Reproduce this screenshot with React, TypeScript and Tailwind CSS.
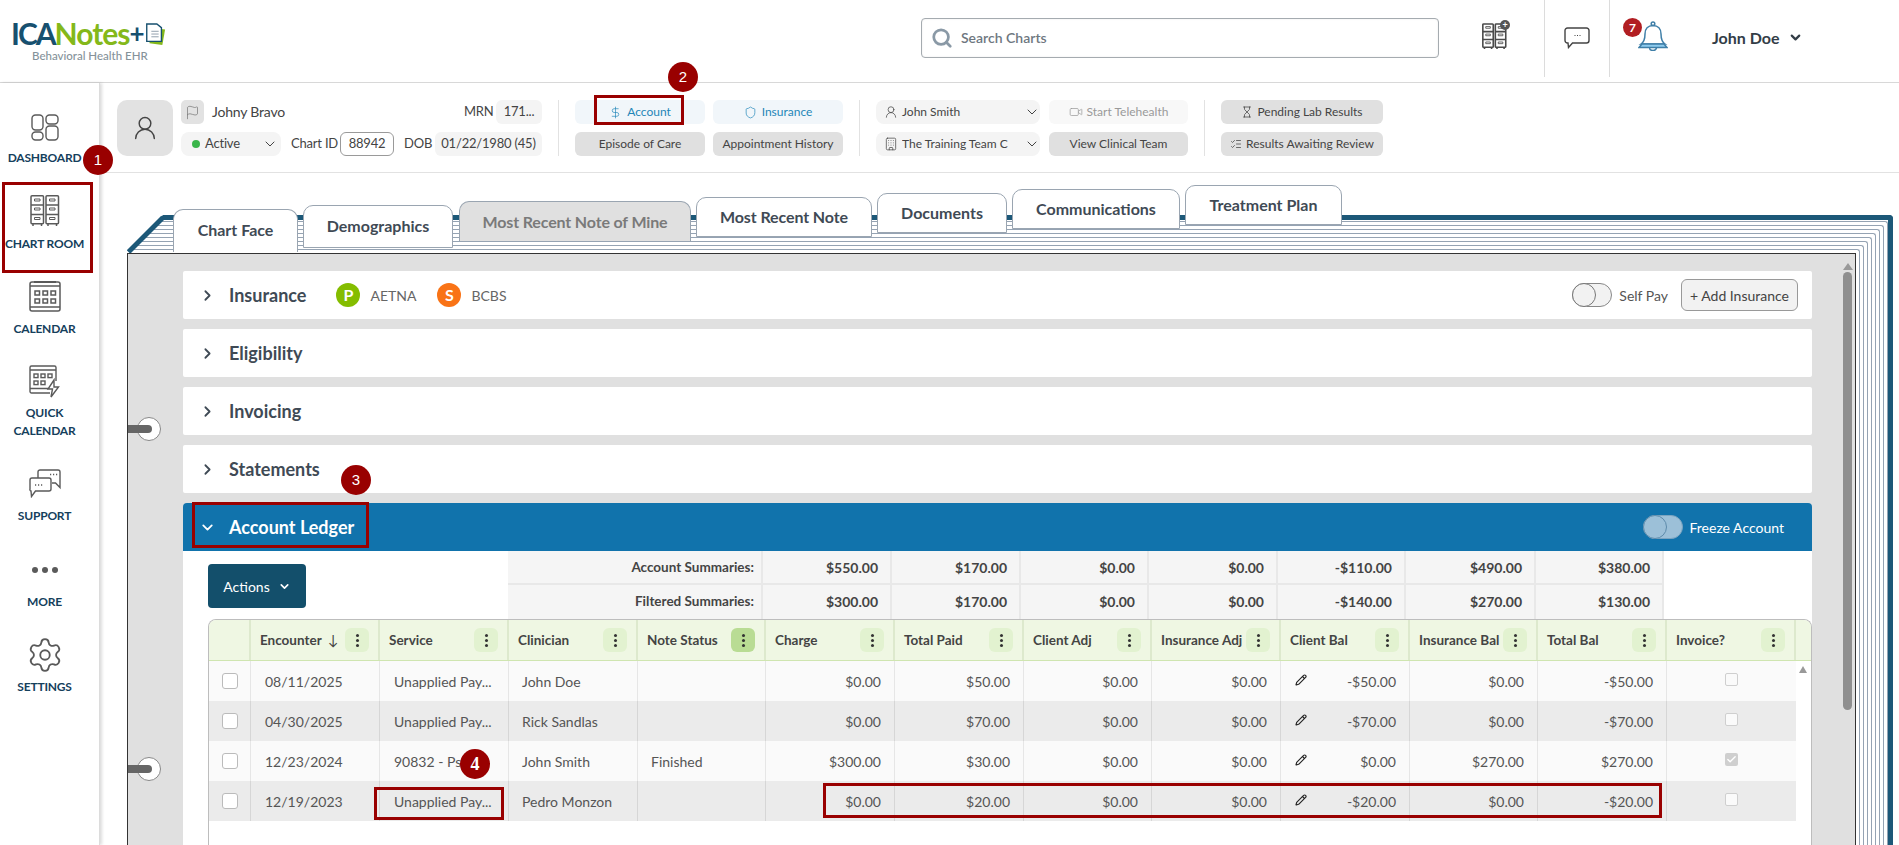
import React from "react";
import { Building, Check, ChevronDown, ChevronRight, DollarSign, Flag, Hourglass, ListChecks, Pencil, Search, Settings, Shield, UserRound, Video } from "lucide-react";

const Dashboard = () => (
  <svg width="28" height="27" viewBox="0 0 28 27" fill="none" stroke="#5a5a5a" strokeWidth="1.4">
    <rect x="1" y="1" width="11" height="15" rx="3.5" />
    <rect x="15" y="1" width="12" height="9" rx="3.5" />
    <rect x="1" y="18" width="11" height="8" rx="3.5" />
    <rect x="15" y="12" width="12" height="14" rx="3.5" />
  </svg>
);

const CabinetCol = ({ x }: { x: number }) => (
  <g>
    <rect x={x} y="0.8" width="12.5" height="28" rx="1" />
    <path d={`M${x} 10h12.5M${x} 19.5h12.5M${x + 2} 29v2M${x + 10.5} 29v2`} />
    <path d={`M${x + 3.5} 4h5.5v2h-5.5zM${x + 3.5} 13h5.5v2h-5.5zM${x + 3.5} 22.5h5.5v2h-5.5z`} strokeWidth="1" />
  </g>
);

const Cabinet = () => (
  <svg width="30" height="32" viewBox="0 0 30 32" fill="none" stroke="#5a5a5a" strokeWidth="1.5">
    <CabinetCol x={1} />
    <CabinetCol x={16} />
  </svg>
);

const CalendarIcon = () => (
  <svg width="32" height="31" viewBox="0 0 32 31" fill="none" stroke="#5a5a5a" strokeWidth="1.5">
    <rect x="1" y="1" width="30" height="29" rx="2" />
    <path d="M1 5h30M1 26h30" />
    <path d="M5 .8h22" strokeWidth="2.4" />
    <rect x="6" y="10" width="4.5" height="4" /><rect x="14" y="10" width="4.5" height="4" /><rect x="22" y="10" width="4.5" height="4" />
    <rect x="6" y="18" width="4.5" height="4" /><rect x="14" y="18" width="4.5" height="4" /><rect x="22" y="18" width="4.5" height="4" />
  </svg>
);

const QuickCalendar = () => (
  <svg width="31" height="33" viewBox="0 0 31 33" fill="none" stroke="#5a5a5a" strokeWidth="1.4">
    <path d="M21 28H2.5a1.5 1.5 0 0 1-1.5-1.5v-24A1.5 1.5 0 0 1 2.5 1h23A1.5 1.5 0 0 1 27 2.5V16" />
    <path d="M1 5h26M1 23.5h18" />
    <rect x="5" y="9" width="4" height="3.6" /><rect x="12" y="9" width="4" height="3.6" /><rect x="19" y="9" width="4" height="3.6" />
    <rect x="5" y="16" width="4" height="3.6" /><rect x="12" y="16" width="4" height="3.6" />
    <path d="M25 15l-6 9h4.5l-1.5 8 7.5-10H25z" fill="#fff" />
  </svg>
);

const Support = () => (
  <svg width="32" height="29" viewBox="0 0 32 29" fill="none" stroke="#5a5a5a" strokeWidth="1.4">
    <path d="M9 9V3a2 2 0 0 1 2-2h18a2 2 0 0 1 2 2v15.5L26.5 14H23" />
    <path d="M3 9h17a2 2 0 0 1 2 2v9a2 2 0 0 1-2 2H6.5L2.5 27.5 2 22a1.5 1.5 0 0 1-1-2v-9a2 2 0 0 1 2-2z" fill="#fff" />
    <path d="M21 5.5h1.2M24 5.5h1.2M27 5.5h1.2M6 16h1.2M9 16h1.2M12 16h1.2" />
  </svg>
);

const ChatBubble = () => (
  <svg width="26" height="22" viewBox="0 0 26 22" fill="none" stroke="#444" strokeWidth="1.4">
    <path d="M3.5 1h19A2.5 2.5 0 0 1 25 3.5v10a2.5 2.5 0 0 1-2.5 2.5H8.5L4.5 20.5 4 16A2.8 2.8 0 0 1 1 13.5v-10A2.5 2.5 0 0 1 3.5 1z" />
    <path d="M10.5 8.5h1M13 8.5h1M15.5 8.5h1" strokeWidth="1" />
  </svg>
);

const Bell = () => (
  <svg width="30" height="30" viewBox="0 0 30 30" fill="none" stroke="#3f7fa8" strokeWidth="1.5">
    <path d="M3 23c3-2 4-5 4-10 0-5 3-8.500 8-8.500s8 3.500 8 8.500c0 5 1 8 4 10z" />
    <path d="M1 26.500c1-1 2-2.500 3-3.500h22c1 1 2 2.500 3 3.500z" fill="#8ecbee" />
    <circle cx="15" cy="2.800" r="1.800" />
    <path d="M11.500 26.500a3.500 3 0 0 0 7 0" />
  </svg>
);

const Logo = () => (
  <div className="ml-[11px]">
    <div className="flex items-center h-[28px]">
      <span className="text-[30px] font-bold leading-[28px] tracking-[-2px] text-[#17506f]">ICA</span>
      <span className="text-[30px] font-bold leading-[28px] tracking-[-1px] text-[#84b81a]">Notes</span>
      <span className="text-[26px] font-bold leading-[28px] text-[#17506f] tracking-[-4px]">+</span>
      <svg width="22" height="25" viewBox="0 0 24 25" className="ml-[3px] mt-[2px]">
        <path d="M7 5l16 2-3 17-14-2z" fill="#84b81a" />
        <path d="M3 1h11l5 4v15H3z" fill="#fff" stroke="#17506f" strokeWidth="1.500" />
        <path d="M8 9h8M8 12h8M8 15h8" stroke="#8a99a6" strokeWidth="1" />
      </svg>
    </div>
    <div className="mt-[2px] ml-[21px] text-[11.5px] leading-[14px] font-medium text-[#85929a] whitespace-nowrap">Behavioral Health EHR</div>
  </div>
);

const Nav = ({ wrap, gap, icon, children }: { wrap: string; gap: string; icon: React.ReactNode; children: React.ReactNode }) => (
  <div className={`flex flex-col items-center ${wrap}`}>
    <div className="flex items-center justify-center">{icon}</div>
    <div className={`${gap} text-[12px] font-bold leading-[18px] tracking-[-0.2px] text-[#15405c] text-center whitespace-nowrap`}>{children}</div>
  </div>
);

const Sidebar = () => (
  <aside className="w-[100px] shrink-0 border-r border-[#dcdcdc] shadow-[2px_0_3px_rgba(0,0,0,0.14)] z-20 bg-white pr-[10px]">
    <Nav wrap="mt-[31px]" gap="mt-[8px]" icon={<Dashboard />}>DASHBOARD</Nav>
    <Nav wrap="mt-[28px]" gap="mt-[8px]" icon={<Cabinet />}>CHART ROOM</Nav>
    <Nav wrap="mt-[28px]" gap="mt-[8px]" icon={<CalendarIcon />}>CALENDAR</Nav>
    <Nav wrap="mt-[27px]" gap="mt-[6px]" icon={<QuickCalendar />}>QUICK<br />CALENDAR</Nav>
    <Nav wrap="mt-[29px]" gap="mt-[9px]" icon={<Support />}>SUPPORT</Nav>
    <Nav wrap="mt-[41px]" gap="mt-[19px]" icon={<div className="flex gap-[4px] h-[8px] items-center"><i className="block w-[6px] h-[6px] rounded-full bg-[#5a5a5a]" /><i className="block w-[6px] h-[6px] rounded-full bg-[#5a5a5a]" /><i className="block w-[6px] h-[6px] rounded-full bg-[#5a5a5a]" /></div>}>MORE</Nav>
    <Nav wrap="mt-[25px]" gap="mt-[4px]" icon={<Settings size={38} strokeWidth={1.15} color="#5a5a5a" />}>SETTINGS</Nav>
  </aside>
);

const Cabinet2 = () => (
  <div className="relative w-[25px] h-[28px]">
    <svg width="25" height="28" viewBox="0 0 30 33" fill="none" stroke="#4a4a4a" strokeWidth="1.900"><CabinetCol x={1} /><CabinetCol x={16} /></svg>
    <div className="absolute -top-[3px] -right-[3px] w-[10px] h-[10px] rounded-full bg-[#555] text-white text-[9px] font-bold leading-[10px] text-center">+</div>
  </div>
);

const Header = () => (
  <header className="h-[83px] shrink-0 border-b border-[#d8d8d8] flex items-start bg-white">
    <div className="w-[921px] pt-[19px]"><Logo /></div>
    <div className="mt-[18px] w-[518px] h-[40px] border border-[#a5abb0] rounded-[4px] flex items-center pl-[9px] gap-[8px] pb-px shadow-[inset_0_0_2px_rgba(0,0,0,0.1)]">
      <Search size={22} strokeWidth={3} color="#8a99a6" />
      <span className="text-[14px] font-semibold text-[#6e7780]">Search Charts</span>
    </div>
    <div className="w-[106px] pl-[43px] pt-[23px] h-[77px] border-r border-[#dcdcdc]">
      <Cabinet2 />
    </div>
    <div className="w-[65px] h-[77px] border-r border-[#dcdcdc] flex justify-center pt-[27px]"><ChatBubble /></div>
    <div className="relative w-[102px] pl-[28px] pt-[21px]">
      <Bell />
      <div className="absolute left-[13px] top-[18px] w-[19px] h-[19px] rounded-full bg-[#b11e22] text-white text-[12px] font-bold flex items-center justify-center">7</div>
    </div>
    <div className="flex items-center gap-[8px] h-[75px] text-[16px] font-bold text-[#333d47]">
      John Doe <ChevronDown size={15} strokeWidth={3.5} />
    </div>
  </header>
);

const Btn = ({ tone, w, children }: { tone: string; w: string; children: React.ReactNode }) => (
  <div className={`h-[24px] rounded-[6px] flex items-center justify-center gap-[4px] text-[12px] whitespace-nowrap ${w} ${tone}`}>{children}</div>
);

const Sep = () => <div className="w-px h-[56px] bg-[#e2e2e2] mx-[16px]" />;

const PatientBar = () => (
  <div className="h-[90px] shrink-0 border-b border-[#e2e2e2] flex items-center pl-[17px] bg-white text-[#444] pt-px">
    <div className="w-[56px] h-[56px] rounded-[10px] bg-[#e2e2e2] flex items-center justify-center mr-[8px]"><UserRound size={28} strokeWidth={1.25} color="#444" /></div>
    <div className="w-[361px] flex flex-col gap-[8px] text-[13px] tracking-[-0.2px]">
      <div className="flex items-center h-[24px]">
        <div className="w-[23px] h-[24px] rounded-[5px] bg-[#e2e2e2] flex items-center justify-center"><Flag size={15} strokeWidth={1} color="#666" /></div>
        <span className="ml-[8px] text-[14px] w-[252px] pb-px">Johny Bravo</span>
        <span className="w-[32px]">MRN</span>
        <div className="w-[46px] h-[24px] rounded-[6px] bg-[#f4f4f4] flex items-center justify-center">171...</div>
      </div>
      <div className="flex items-center h-[24px]">
        <div className="w-[100px] h-[24px] rounded-[8px] bg-[#f4f4f4] flex items-center pl-[11px] gap-[5px]">
          <i className="block w-[8px] h-[8px] rounded-full bg-[#3ab54a]" /><span className="w-[52px]">Active</span><ChevronDown size={16} strokeWidth={1.5} />
        </div>
        <span className="ml-[10px] w-[49px]">Chart ID</span>
        <div className="w-[54px] h-[24px] rounded-[6px] border border-[#9a9a9a] flex items-center justify-center">88942</div>
        <span className="ml-[10px] w-[31px]">DOB</span>
        <div className="w-[107px] h-[24px] rounded-[6px] bg-[#f4f4f4] flex items-center justify-center">01/22/1980 (45)</div>
      </div>
    </div>
    <Sep />
    <div className="grid grid-cols-[130px_130px] gap-x-[8px] gap-y-[8px]">
      <Btn w="" tone="bg-[#f1f6fa] text-[#1f86b8]"><DollarSign size={13} strokeWidth={1.25} /><span className="ml-[1px]">Account</span></Btn>
      <Btn w="" tone="bg-[#f1f6fa] text-[#1f86b8]"><Shield size={13} strokeWidth={1.25} /><span className="ml-[1px]">Insurance</span></Btn>
      <Btn w="" tone="bg-[#e0e0e0] text-[#444]">Episode of Care</Btn>
      <Btn w="" tone="bg-[#e0e0e0] text-[#444]">Appointment History</Btn>
    </div>
    <Sep />
    <div className="grid grid-cols-[164px_139px] gap-x-[9px] gap-y-[8px]">
      <div className="h-[24px] rounded-[8px] bg-[#f4f4f4] flex items-center pl-[8px] text-[12px]"><UserRound size={14} strokeWidth={1.25} /><span className="ml-[4px] w-[122px]">John Smith</span><ChevronDown size={16} strokeWidth={1.5} /></div>
      <Btn w="" tone="bg-[#f8f8f8] text-[#9a9a9a]"><Video size={14} strokeWidth={1.25} />Start Telehealth</Btn>
      <div className="h-[24px] rounded-[8px] bg-[#f4f4f4] flex items-center pl-[8px] text-[12px]"><Building size={14} strokeWidth={1.25} /><span className="ml-[4px] w-[122px] overflow-hidden whitespace-nowrap">The Training Team C</span><ChevronDown size={16} strokeWidth={1.5} /></div>
      <Btn w="" tone="bg-[#e0e0e0] text-[#444]">View Clinical Team</Btn>
    </div>
    <Sep />
    <div className="flex flex-col gap-[8px]">
      <Btn w="w-[162px]" tone="bg-[#e0e0e0] text-[#444]"><Hourglass size={12} strokeWidth={1.5} />Pending Lab Results</Btn>
      <Btn w="w-[162px]" tone="bg-[#e0e0e0] text-[#444]"><ListChecks size={12} strokeWidth={1.5} />Results Awaiting Review</Btn>
    </div>
  </div>
);

const Tab = ({ cls, children }: { cls: string; children: React.ReactNode }) => (
  <div className={`shrink-0 rounded-t-[10px] border border-[#9aa5b1] flex items-center justify-center text-[16px] font-bold ${cls}`}>{children}</div>
);

const Tabs = () => (
  <div className="relative z-10 flex items-start gap-[5px] pl-[73px] h-[67px] mb-[-37px] mt-[12px]">
    <Tab cls="mt-[24px] h-[43px] w-[125px] bg-white border-b-0 text-[#3f4a55] pb-[2px]">Chart Face</Tab>
    <Tab cls="mt-[20px] h-[43px] w-[150px] bg-white text-[#3f4a55] pb-[2px]">Demographics</Tab>
    <Tab cls="mt-[16px] ml-[1px] h-[40px] w-[232px] bg-[#e0e0e0] border-b-0 text-[#7a7a7a] tracking-[-0.15px]">Most Recent Note of Mine</Tab>
    <Tab cls="mt-[12px] h-[40px] w-[176px] bg-white text-[#3f4a55] tracking-[-0.1px]">Most Recent Note</Tab>
    <Tab cls="mt-[8px] h-[40px] w-[130px] bg-white text-[#3f4a55]">Documents</Tab>
    <Tab cls="mt-[4px] h-[40px] w-[168px] bg-white text-[#3f4a55]">Communications</Tab>
    <Tab cls="mt-0 h-[40px] w-[157px] bg-white text-[#3f4a55]">Treatment Plan</Tab>
  </div>
);

const Page = ({ n, children }: { n: number; children: React.ReactNode }) =>
  n === 0 ? <>{children}</> : (
    <div className="border-t border-r border-[#95a3b3] pt-[3px] pr-[3px] rounded-tr-[3px]">
      <Page n={n - 1}>{children}</Page>
    </div>
  );

const Toggle = ({ cls, knob }: { cls: string; knob: string }) => (
  <div className={`relative w-[40px] h-[24px] rounded-full border ${cls}`}>
    <div className={`absolute left-0 top-0 -m-px w-[24px] h-[24px] rounded-full border ${knob}`} />
  </div>
);

const Row = ({ title, children }: { title: string; children?: React.ReactNode }) => (
  <div className="h-[48px] bg-white rounded-[2px] flex items-center pl-[16px] pr-[14px] text-[#3f4a55]">
    <ChevronRight size={17} strokeWidth={2.5} />
    <span className="ml-[13px] text-[18px] font-bold">{title}</span>
    {children}
  </div>
);

const Payer = ({ tone, letter, cls, children }: { tone: string; letter: string; cls: string; children: React.ReactNode }) => (
  <div className={`flex items-center text-[14px] text-[#666] ${cls}`}>
    <div className={`w-[24px] h-[24px] rounded-full text-white font-bold text-[16px] flex items-center justify-center ${tone}`}>{letter}</div>
    <span className="ml-[10px]">{children}</span>
  </div>
);

const summaryGrid = "grid grid-cols-[255px_129px_129px_128px_129px_128px_130px_128px]";
const SumRow = ({ label, vals, cls }: { label: string; vals: string[]; cls: string }) => (
  <div className={`${summaryGrid} ${cls} text-[#444]`}>
    <div className="pr-[7px] text-right text-[13.5px] font-bold border-r-2 border-[#e8e8e8] leading-[33px]">{label}</div>
    {vals.map((v, i) => (
      <div key={i} className="pr-[12px] text-right text-[14px] font-bold border-r-2 border-[#e8e8e8] leading-[33px]">{v}</div>
    ))}
  </div>
);

const tableGrid = "grid grid-cols-[42px_129px_129px_129px_128px_129px_129px_128px_129px_129px_128px_129px_129px_15px]";
const heads = ["Encounter", "Service", "Clinician", "Note Status", "Charge", "Total Paid", "Client Adj", "Insurance Adj", "Client Bal", "Insurance Bal", "Total Bal", "Invoice?"];

const Kebab = ({ dark }: { dark?: boolean }) => (
  <div className={`absolute right-[9px] top-[8px] w-[24px] h-[24px] rounded-[6px] flex flex-col items-center justify-center gap-[2px] ${dark ? "bg-[#b9dc94]" : "bg-[#e2f2d0]"}`}>
    <i className="block w-[3px] h-[3px] rounded-full bg-[#333]" />
    <i className="block w-[3px] h-[3px] rounded-full bg-[#333]" />
    <i className="block w-[3px] h-[3px] rounded-full bg-[#333]" />
  </div>
);

const rows = [
  ["08/11/2025", "Unapplied Pay...", "John Doe", "", "$0.00", "$50.00", "$0.00", "$0.00", "-$50.00", "$0.00", "-$50.00"],
  ["04/30/2025", "Unapplied Pay...", "Rick Sandlas", "", "$0.00", "$70.00", "$0.00", "$0.00", "-$70.00", "$0.00", "-$70.00"],
  ["12/23/2024", "90832 - Psy...", "John Smith", "Finished", "$300.00", "$30.00", "$0.00", "$0.00", "$0.00", "$270.00", "$270.00"],
  ["12/19/2023", "Unapplied Pay...", "Pedro Monzon", "", "$0.00", "$20.00", "$0.00", "$0.00", "-$20.00", "$0.00", "-$20.00"],
];

const Table = () => (
  <div className="ml-[25px] h-[300px] border border-b-0 border-[#bdbdbd] rounded-t-[8px] overflow-hidden relative">
    <div className={`${tableGrid} h-[41px] bg-[#eff7e3] border-b border-[#cfe5b0]`}>
      <div className="border-r-2 border-[#dde9cd]" />
      {heads.map((h, i) => (
        <div key={h} className="relative flex items-center pl-[9px] text-[13.5px] font-bold text-[#444] border-r-2 border-[#dde9cd] whitespace-nowrap">
          {h}
          {i === 0 && <span className="ml-[6px] text-[14px] font-normal leading-none">↓</span>}
          <Kebab dark={i === 3} />
        </div>
      ))}
      <div />
    </div>
    {rows.map((r, ri) => {
      const dark = ri % 2 === 1;
      const line = dark ? "border-[#d6d6d6]" : "border-[#e6e6e6]";
      return (
        <div key={r[0]} className={`${tableGrid} h-[40px] text-[14px] text-[#555] ${dark ? "bg-[#ebebeb]" : "bg-[#fafafa]"}`}>
          <div className={`border-r ${line} flex items-center pl-[13px]`}><div className="w-[16px] h-[16px] bg-white border border-[#bbb] rounded-[3px]" /></div>
          {r.map((c, i) => (
            <div key={i} className={`border-r ${line} flex items-center whitespace-nowrap overflow-hidden ${i < 2 ? "pl-[14px]" : i < 4 ? "pl-[13px]" : "justify-end pr-[13px]"} ${i === 8 ? "relative" : ""}`}>
              {i === 8 && <Pencil size={12} strokeWidth={2.25} color="#222" className="absolute left-[14px] top-[13px]" />}
              {c}
            </div>
          ))}
          <div className="flex justify-center pt-[12px]">
            {ri === 2 ? (
              <div className="w-[13px] h-[13px] bg-[#cfcfcf] rounded-[2px] flex items-center justify-center"><Check size={11} strokeWidth={3} color="#fff" /></div>
            ) : (
              <div className="w-[13px] h-[13px] border border-[#cfcfcf] rounded-[2px] bg-[#fafafa]" />
            )}
          </div>
          <div className="bg-white relative">
            {ri === 0 && <div className="absolute left-[3px] top-[5px] w-0 h-0 border-l-[4.5px] border-r-[4.5px] border-b-[7px] border-l-transparent border-r-transparent border-b-[#999]" />}
          </div>
        </div>
      );
    })}
  </div>
);

const Ledger = () => (
  <div className="rounded-t-[4px] overflow-hidden">
    <div className="h-[48px] bg-[#1173ac] flex items-center pl-[16px] pr-[28px] text-white">
      <ChevronDown size={17} strokeWidth={2.5} />
      <span className="ml-[13px] text-[18px] font-bold">Account Ledger</span>
      <div className="ml-auto flex items-center gap-[7px]">
        <Toggle cls="bg-[#9cc0d8] border-[#7ba4c0]" knob="bg-[#9cc0d8] border-[#5d8bab]" />
        <span className="text-[14px]">Freeze Account</span>
      </div>
    </div>
    <div className="bg-white">
      <div className="flex h-[68px]">
        <div className="w-[325px] pl-[25px] pt-[13px]">
          <div className="w-[98px] h-[44px] bg-[#134f6b] rounded-[4px] flex items-center justify-center gap-[8px] text-white text-[14px]">
            Actions <ChevronDown size={13} strokeWidth={3} />
          </div>
        </div>
        <div className="bg-[#f5f5f5]">
          <SumRow label="Account Summaries:" cls="h-[34px] border-b-2 border-[#e8e8e8]" vals={["$550.00", "$170.00", "$0.00", "$0.00", "-$110.00", "$490.00", "$380.00"]} />
          <SumRow label="Filtered Summaries:" cls="h-[34px]" vals={["$300.00", "$170.00", "$0.00", "$0.00", "-$140.00", "$270.00", "$130.00"]} />
        </div>
      </div>
      <Table />
    </div>
  </div>
);

const Ring = ({ cls }: { cls: string }) => (
  <div className={`absolute left-0 w-[35px] h-[24px] ${cls}`}>
    <div className="absolute left-[9px] top-0 w-[24px] h-[24px] rounded-full bg-white border border-[#888]" />
    <div className="absolute left-0 top-[8px] w-[24px] h-[8px] rounded-r-full bg-[#666]" />
  </div>
);

const Notebook = () => (
  <div className="flex-1 min-h-0 relative bg-white">
    <Tabs />
    <div className="relative ml-[27px] mr-[6px] border-t-[5px] border-r-[5px] border-[#1c5878] rounded-tr-[4px]">
      <svg width="40" height="40" viewBox="0 0 40 40" className="absolute left-0 top-[-5px]">
        <path d="M0 0h36L0 36z" fill="#fff" />
        <path d="M36 2.500L1.500 37" stroke="#1c5878" strokeWidth="5" fill="none" />
      </svg>
      <div className="pt-px">
        <Page n={8}>
          <div className="relative bg-[#e0e0e0] border-t border-l border-r border-[#333] pl-[55px] pr-[43px] pt-[17px] h-[640px]">
            <Ring cls="top-[163px]" />
            <Ring cls="top-[503px]" />
            <div className="flex flex-col gap-[10px]">
              <Row title="Insurance">
                <Payer tone="bg-[#84bd00]" letter="P" cls="ml-[30px]">AETNA</Payer>
                <Payer tone="bg-[#f97316]" letter="S" cls="ml-[21px]">BCBS</Payer>
                <div className="ml-auto flex items-center">
                  <Toggle cls="bg-[#f2f2f2] border-[#888]" knob="bg-[#f2f2f2] border-[#777]" />
                  <span className="ml-[7px] text-[14px] text-[#555]">Self Pay</span>
                  <div className="ml-[13px] w-[117px] h-[32px] bg-[#f2f2f2] border border-[#999] rounded-[6px] flex items-center justify-center text-[14px] text-[#444]">+ Add Insurance</div>
                </div>
              </Row>
              <Row title="Eligibility" />
              <Row title="Invoicing" />
              <Row title="Statements" />
              <Ledger />
            </div>
            <div className="absolute right-[2px] top-[9px] w-[11px]">
              <div className="mx-auto w-0 h-0 border-l-[5px] border-r-[5px] border-b-[7px] border-l-transparent border-r-transparent border-b-[#999]" />
              <div className="mt-[2px] w-[9px] h-[438px] mx-auto rounded-full bg-[#8f8f8f]" />
            </div>
          </div>
        </Page>
      </div>
    </div>
  </div>
);

const Badge = ({ cls, serif, children }: { cls: string; serif?: boolean; children: React.ReactNode }) => (
  <div className={`absolute z-40 w-[30px] h-[30px] rounded-full bg-[#990000] text-white flex items-center justify-center ${serif ? "font-['Liberation_Serif'] font-bold text-[18px]" : "font-['Liberation_Sans'] text-[15px]"} ${cls}`}>{children}</div>
);

const Box = ({ cls }: { cls: string }) => <div className={`absolute z-30 border-[3px] border-[#990000] ${cls}`} />;

export default function App() {
  return (
    <div className="relative w-[1899px] h-[845px] overflow-hidden bg-white flex flex-col font-['Lato','Open_Sans',sans-serif]">
      <Header />
      <div className="flex flex-1 min-h-0">
        <Sidebar />
        <main className="flex-1 min-w-0 flex flex-col">
          <PatientBar />
          <Notebook />
        </main>
      </div>
      <Box cls="left-[2px] top-[182px] w-[91px] h-[91px]" />
      <Box cls="left-[594px] top-[95px] w-[90px] h-[30px]" />
      <Box cls="left-[192px] top-[502px] w-[177px] h-[46px]" />
      <Box cls="left-[374px] top-[787px] w-[130px] h-[33px]" />
      <Box cls="left-[823px] top-[783px] w-[839px] h-[35px]" />
      <Badge cls="left-[83px] top-[145px]">1</Badge>
      <Badge cls="left-[668px] top-[62px]">2</Badge>
      <Badge cls="left-[341px] top-[465px]">3</Badge>
      <Badge cls="left-[460px] top-[749px]" serif>4</Badge>
    </div>
  );
}
